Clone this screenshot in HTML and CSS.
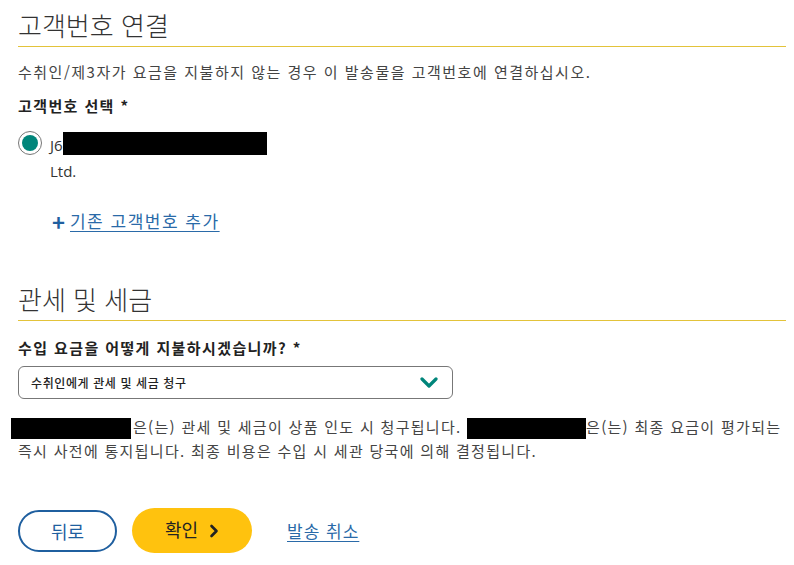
FILE: index.html
```html
<!DOCTYPE html>
<html lang="ko">
<head>
    <meta charset="UTF-8">
    <meta name="viewport" content="width=device-width, initial-scale=1.0">
    <title>고객번호 연결</title>
    <link rel="stylesheet" href="styles.css">
</head>
<body>
    <section class="section">
        <h2 class="section-title">고객번호 연결</h2>
        <p class="intro">수취인/제3자가 요금을 지불하지 않는 경우 이 발송물을 고객번호에 연결하십시오.</p>
        <div class="field-label">고객번호 선택 *</div>

        <label class="radio-row">
            <span class="radio"><span class="radio-dot"></span></span>
            <span class="radio-text">J6<span class="redact redact-account"></span><br>Ltd.</span>
        </label>

        <a class="add-link" href="#"><span class="plus">+</span><span class="add-text">기존 고객번호 추가</span></a>
    </section>

    <section class="section section-duties">
        <h2 class="section-title">관세 및 세금</h2>
        <div class="field-label">수입 요금을 어떻게 지불하시겠습니까? *</div>
        <div class="select">
            <span class="select-value">수취인에게 관세 및 세금 청구</span>
            <svg class="chevron" width="18" height="12" viewBox="0 0 18 12">
                <path d="M2 2 L9 9 L16 2" fill="none" stroke="#00857a" stroke-width="3.2" stroke-linecap="round" stroke-linejoin="round"/>
            </svg>
        </div>
        <p class="note"><span class="redact redact-name"></span>은(는) 관세 및 세금이 상품 인도 시 청구됩니다. <span class="redact redact-name2"></span>은(는) 최종 요금이 평가되는 즉시 사전에 통지됩니다. 최종 비용은 수입 시 세관 당국에 의해 결정됩니다.</p>
    </section>

    <div class="actions">
        <button type="button" class="btn btn-back">뒤로</button>
        <button type="button" class="btn btn-confirm">확인
            <svg class="btn-arrow" width="10" height="14" viewBox="0 0 10 14">
                <path d="M2.5 2 L7.5 7 L2.5 12" fill="none" stroke="#222" stroke-width="2.6" stroke-linecap="round" stroke-linejoin="round"/>
            </svg>
        </button>
        <a class="cancel-link" href="#">발송 취소</a>
    </div>
</body>
</html>
```

FILE: styles.css
```css
body {
    font-family: "Noto Sans CJK KR", "Noto Sans", sans-serif;
    color: #333;
    background-color: #fff;
    margin: 0;
    padding: 0 8px 0 18px;
}

.section {
    padding-top: 8px;
}

.section-title {
    font-size: 26px;
    font-weight: 300;
    color: #333;
    margin: 0;
    padding-bottom: 4px;
    line-height: 34px;
    border-bottom: 1px solid #e3c33a;
}

.intro {
    font-size: 15px;
    letter-spacing: 1.5px;
    line-height: 20px;
    margin: 15px 0 0;
    color: #444;
}

.field-label {
    font-size: 15px;
    letter-spacing: 1.4px;
    font-weight: 700;
    line-height: 20px;
    margin-top: 14px;
    color: #222;
}

.radio-row {
    display: flex;
    align-items: flex-start;
    margin-top: 14px;
    gap: 8px;
}

.radio {
    box-sizing: border-box;
    width: 24px;
    height: 24px;
    border: 1.5px solid #777;
    border-radius: 50%;
    display: flex;
    align-items: center;
    justify-content: center;
    flex-shrink: 0;
    margin-top: 1px;
}

.radio-dot {
    width: 16px;
    height: 16px;
    border-radius: 50%;
    background-color: #00857a;
}

.radio-text {
    font-family: "Open Sans", "Noto Sans", sans-serif;
    font-size: 15px;
    line-height: 26px;
    padding-top: 2px;
    color: #333;
}

.redact {
    display: inline-block;
    background-color: #000;
    vertical-align: middle;
}

.redact-account {
    width: 204px;
    height: 23px;
    margin-top: -6px;
}

.add-link {
    display: inline-flex;
    align-items: center;
    margin: 25px 0 0 34px;
    text-decoration: none;
    color: #1f5f9f;
}

.plus {
    font-size: 22px;
    font-weight: 700;
    line-height: 20px;
    margin-right: 5px;
    color: #1f5f9f;
}

.add-text {
    font-size: 17px;
    letter-spacing: 1.5px;
    line-height: 24px;
    text-decoration: underline;
    text-underline-offset: 3px;
    color: #2a6aa8;
}

.section-duties {
    margin-top: 38px;
}

.section-duties .field-label {
    margin-top: 17px;
}

.select {
    box-sizing: border-box;
    display: flex;
    align-items: center;
    justify-content: space-between;
    width: 435px;
    height: 33px;
    margin-top: 8px;
    padding: 0 14px 0 12px;
    border: 1px solid #777;
    border-radius: 6px;
}

.select-value {
    font-size: 12px;
    letter-spacing: 0.6px;
    font-weight: 500;
    color: #222;
}

.note {
    font-size: 15px;
    letter-spacing: 1.3px;
    line-height: 24px;
    margin: 16px 0 0;
    color: #444;
}

.redact-name {
    width: 120px;
    height: 21px;
    margin-left: -7px;
    margin-right: 2px;
}

.redact-name2 {
    width: 119px;
    height: 21px;
}

.actions {
    display: flex;
    align-items: center;
    gap: 15px;
    margin-top: 45px;
}

.btn {
    font-family: "Noto Sans CJK KR", "Noto Sans", sans-serif;
    font-size: 18px;
    border-radius: 23px;
    cursor: pointer;
}

.btn-back {
    width: 99px;
    height: 42px;
    background-color: #fff;
    border: 2px solid #1f5f9f;
    color: #1f5f9f;
}

.btn-confirm {
    display: flex;
    align-items: center;
    justify-content: center;
    gap: 11px;
    width: 120px;
    height: 45px;
    background-color: #ffc20e;
    border: none;
    color: #222;
    padding: 0 0 4px;
}

.btn-arrow {
    margin-top: 4px;
}

.cancel-link {
    font-size: 17px;
    letter-spacing: 1px;
    color: #2a6aa8;
    margin-left: 20px;
    text-underline-offset: 3px;
}
```
